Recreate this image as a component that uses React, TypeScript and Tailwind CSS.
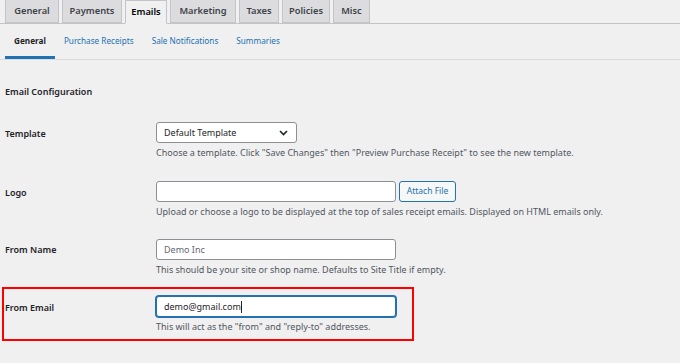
const tabs = [
  { name: 'General', w: 'w-[54px]' },
  { name: 'Payments', w: 'w-[60px]' },
  { name: 'Emails', w: 'w-[42px]', active: true },
  { name: 'Marketing', w: 'w-[66px]' },
  { name: 'Taxes', w: 'w-[40px]' },
  { name: 'Policies', w: 'w-[48px]' },
  { name: 'Misc', w: 'w-[37px]' },
];

const subTabs = ['General', 'Purchase Receipts', 'Sale Notifications', 'Summaries'];

function Chevron() {
  return (
    <svg width="9" height="6" viewBox="0 0 9 6" fill="none">
      <path d="M1 1l3.5 3.5L8 1" stroke="#1d2327" strokeWidth="1.6" />
    </svg>
  );
}

export default function App() {
  return (
    <div className="w-[680px] h-[363px] overflow-hidden bg-[#f0f0f1] text-[#1d2327] text-[9px]" style={{ fontFamily: '"Noto Sans", "Open Sans", sans-serif' }}>
      {/* Main tabs */}
      <div className="flex items-end h-[24px] pl-[5px] gap-[3px] border-b border-[#c3c4c7]">
        {tabs.map((t) => (
          <div
            key={t.name}
            className={`${t.w} h-[24px] flex items-center justify-center border border-[#c3c4c7] text-[9.3px] font-semibold ${
              t.active ? 'bg-[#f0f0f1] border-b-[#f0f0f1] -mb-px text-black' : 'bg-[#dcdcde] text-[#3c434a]'
            }`}
          >
            {t.name}
          </div>
        ))}
      </div>

      {/* Sub tabs */}
      <div className="flex h-[36px] pl-[5px] border-b border-[#dcdcde] text-[8.2px]">
        {subTabs.map((s, i) => (
          <div
            key={s}
            className={`px-[9px] flex items-center pt-[2px] ${
              i === 0 ? 'font-bold text-[#1d2327] border-b-[3px] border-[#2271b1]' : 'text-[#2271b1] border-b-[3px] border-transparent'
            }`}
          >
            {s}
          </div>
        ))}
      </div>

      <div className="px-[5px]">
        <h2 className="font-semibold text-[9px] mt-[25px] leading-[14px]">Email Configuration</h2>

        {/* Template */}
        <div className="flex mt-[23px]">
          <div className="w-[151px] h-[21px] pt-[3px] flex items-center font-semibold">Template</div>
          <div>
            <div className="w-[141px] h-[21px] border border-[#8c8f94] rounded-[3px] bg-white flex items-center justify-between pl-[7px] pr-[8px]">
              <span>Default Template</span>
              <Chevron />
            </div>
            <p className="text-[#50575e] mt-[3px] leading-[14px]">
              Choose a template. Click "Save Changes" then "Preview Purchase Receipt" to see the new template.
            </p>
          </div>
        </div>

        {/* Logo */}
        <div className="flex mt-[21px]">
          <div className="w-[151px] h-[21px] pt-[2px] flex items-center font-semibold">Logo</div>
          <div>
            <div className="flex items-center gap-[3px]">
              <div className="w-[240px] h-[21px] border border-[#8c8f94] rounded-[3px] bg-white" />
              <button className="w-[57px] h-[21px] border border-[#2271b1] rounded-[3px] bg-[#f6f7f7] text-[#2271b1] text-[8.5px]">
                Attach File
              </button>
            </div>
            <p className="text-[#50575e] mt-[3px] leading-[14px]">
              Upload or choose a logo to be displayed at the top of sales receipt emails. Displayed on HTML emails only.
            </p>
          </div>
        </div>

        {/* From Name */}
        <div className="flex mt-[20px]">
          <div className="w-[151px] h-[21px] pt-[1px] flex items-center font-semibold">From Name</div>
          <div>
            <div className="w-[240px] h-[21px] border border-[#8c8f94] rounded-[3px] bg-white flex items-center pl-[7px] text-[#646970]">
              Demo Inc
            </div>
            <p className="text-[#50575e] mt-[3px] leading-[14px]">
              This should be your site or shop name. Defaults to Site Title if empty.
            </p>
          </div>
        </div>

        {/* From Email */}
        <div className="-ml-[3px] mt-[10px] w-[412px] h-[54px] border-2 border-[#ff0000] pt-[7px] pl-[1px]">
          <div className="flex">
            <div className="w-[151px] h-[21px] pt-[3px] flex items-center font-semibold">From Email</div>
            <div>
              <div className="w-[240px] h-[21px] border border-[#2271b1] rounded-[3px] bg-white pl-[7px] shadow-[0_0_0_1px_#2271b1] flex items-center">
                <span>demo@gmail.com</span>
                <span className="w-px h-[12px] bg-[#1d2327]" />
              </div>
              <p className="text-[#50575e] mt-[3px] leading-[14px]">
                This will act as the "from" and "reply-to" addresses.
              </p>
            </div>
          </div>
        </div>
      </div>
    </div>
  );
}
